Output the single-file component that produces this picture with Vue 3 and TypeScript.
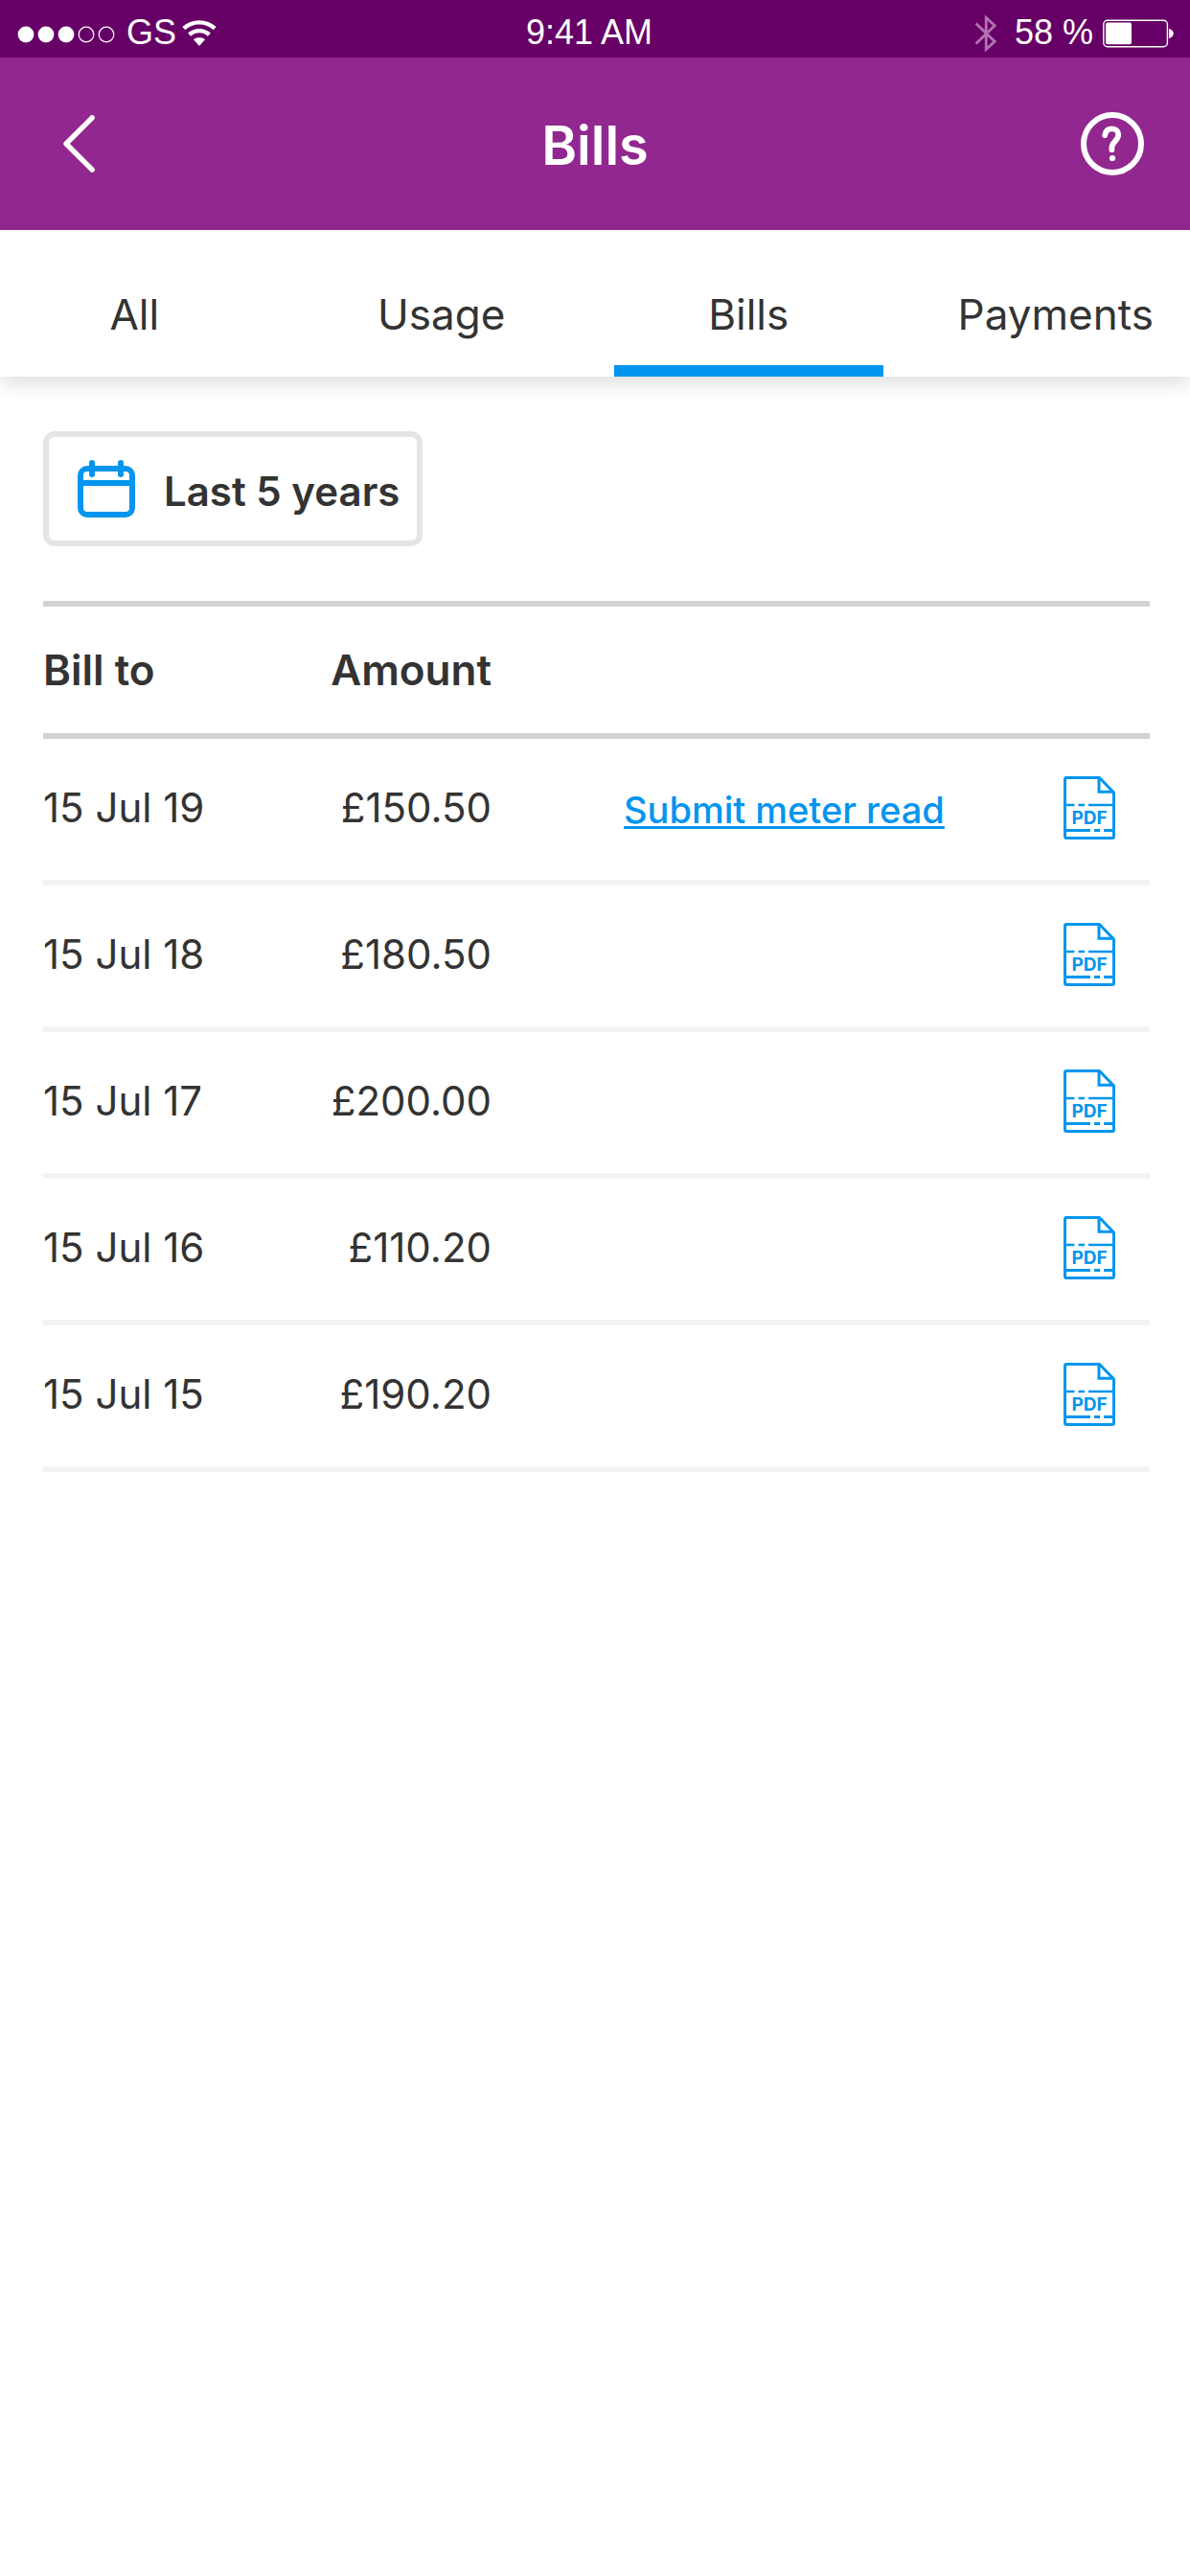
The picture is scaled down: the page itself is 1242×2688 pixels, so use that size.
<script setup lang="ts">
import { ref } from 'vue'

interface Bill {
  date: string
  amount: string
  canSubmitRead?: boolean
}

const tabs: string[] = ['All', 'Usage', 'Bills', 'Payments']
const activeTab = ref<string>('Bills')

const bills: Bill[] = [
  { date: '15 Jul 19', amount: '£150.50', canSubmitRead: true },
  { date: '15 Jul 18', amount: '£180.50' },
  { date: '15 Jul 17', amount: '£200.00' },
  { date: '15 Jul 16', amount: '£110.20' },
  { date: '15 Jul 15', amount: '£190.20' },
]
</script>

<template>
  <div class="screen">
    <div class="status-bar">
      <div class="status-left">
        <svg class="signal" width="102" height="18" viewBox="0 0 102 18" aria-hidden="true">
          <g fill="#fff">
            <circle cx="9" cy="9" r="8.4" />
            <circle cx="30" cy="9" r="8.4" />
            <circle cx="51" cy="9" r="8.4" />
          </g>
          <g fill="none" stroke="#fff" stroke-width="1.2">
            <circle cx="72" cy="9" r="7.8" />
            <circle cx="93" cy="9" r="7.8" />
          </g>
        </svg>
        <span class="carrier">GS</span>
        <svg class="wifi" width="36" height="28" viewBox="0 0 36 28" aria-hidden="true">
          <g fill="none" stroke="#fff" stroke-width="4.4">
            <path d="M1.8 8.6C11 .3 25 .3 34.2 8.6" />
            <path d="M7.6 15.2C13.5 9.8 22.5 9.8 28.4 15.2" />
          </g>
          <path d="M12 20.2C15.3 17.6 20.7 17.6 24 20.2L18 27Z" fill="#fff" />
        </svg>
      </div>
      <span class="time">9:41 AM</span>
      <div class="status-right">
        <svg class="bluetooth" width="24" height="40" viewBox="0 0 24 40" aria-hidden="true">
          <path
            d="M1.6 9.4L21.2 28.2L12.2 36.6V3.4L21.2 11.8L1.6 30.6"
            fill="none"
            stroke="#b273b2"
            stroke-width="2.8"
          />
        </svg>
        <span class="charge">58 %</span>
        <svg class="battery" width="75" height="30" viewBox="0 0 75 30" aria-hidden="true">
          <rect x=".8" y="1.3" width="66.6" height="27.4" rx="4" fill="none" stroke="#fff" stroke-width="1.4" />
          <rect x="3" y="3.6" width="27" height="22.6" rx="2" fill="#fff" />
          <path d="M69 10C75.4 11.6 75.4 18.4 69 20Z" fill="#fff" />
        </svg>
      </div>
    </div>

    <header class="app-header">
      <button class="icon-button" type="button" aria-label="Back">
        <svg width="33" height="60" viewBox="0 0 33 60" aria-hidden="true">
          <path
            d="M30.2 2.8L3 30L30.2 57.2"
            fill="none"
            stroke="#fff"
            stroke-width="5.4"
            stroke-linecap="round"
            stroke-linejoin="round"
          />
        </svg>
      </button>
      <h1 class="title">Bills</h1>
      <button class="icon-button help" type="button" aria-label="Help">
        <svg width="66" height="66" viewBox="0 0 66 66" aria-hidden="true">
          <circle cx="33" cy="33" r="30" fill="none" stroke="#fff" stroke-width="6" />
          <path
            d="M25.2 24.2C25.8 19.8 28.6 17.3 32.6 17.3C36.6 17.3 39.2 19.8 39.2 23.6C39.2 30 32.4 31 32.4 37V39.2"
            fill="none"
            stroke="#fff"
            stroke-width="5.8"
            stroke-linecap="round"
            stroke-linejoin="round"
          />
          <circle cx="33" cy="48" r="3.1" fill="#fff" />
        </svg>
      </button>
    </header>

    <nav class="tabs">
      <button
        v-for="tab in tabs"
        :key="tab"
        type="button"
        class="tab"
        :class="{ active: tab === activeTab }"
        @click="activeTab = tab"
      >
        {{ tab }}
      </button>
    </nav>

    <main class="content">
      <button class="period" type="button">
        <svg width="60" height="60" viewBox="0 0 60 60" aria-hidden="true">
          <g fill="none" stroke="#0495ee" stroke-width="6">
            <rect x="3" y="9" width="54" height="48" rx="7" />
            <path d="M3 24H57" />
            <path d="M15 3V15M45 3V15" stroke-linecap="round" />
          </g>
        </svg>
        <span class="period-label">Last 5 years</span>
      </button>

      <table class="bills">
        <colgroup>
          <col class="col-date" />
          <col class="col-amount" />
          <col />
          <col class="col-file" />
        </colgroup>
        <thead>
          <tr>
            <th scope="col">Bill to</th>
            <th scope="col" class="amount">Amount</th>
            <th></th>
            <th></th>
          </tr>
        </thead>
        <tbody>
          <tr v-for="bill in bills" :key="bill.date">
            <td>{{ bill.date }}</td>
            <td class="amount">{{ bill.amount }}</td>
            <td class="action">
              <a v-if="bill.canSubmitRead" href="#" class="read-link">Submit meter read</a>
            </td>
            <td class="file">
              <a href="#" class="file-link" :aria-label="`Download bill ${bill.date}`">
                <svg width="54" height="66" viewBox="0 0 54 66" aria-hidden="true">
                  <g fill="none" stroke="#0495ee" stroke-width="3" stroke-linejoin="round">
                    <path d="M1.5 3Q1.5 1.5 3 1.5H37.5L52.5 17V63Q52.5 64.5 51 64.5H3Q1.5 64.5 1.5 63Z" />
                    <path d="M37 2V16.2H52" stroke-linejoin="miter" />
                    <path d="M2 30H11.5M15.5 30H22M26 30H52" stroke-width="2.6" />
                    <path d="M2 56.4H28M32 56.4H38M42 56.4H52" />
                  </g>
                  <text x="27" y="49.5" text-anchor="middle" class="file-type">PDF</text>
                </svg>
              </a>
            </td>
          </tr>
        </tbody>
      </table>
    </main>
  </div>
</template>

<style>
body {
  margin: 0;
  background: #fff;
}
</style>

<style scoped>
.screen {
  min-height: 100vh;
  background: #fff;
  color: #333;
  font-family: Inter, 'Open Sans', sans-serif;
  font-size: 42px;
  line-height: 48px;
}

button {
  margin: 0;
  padding: 0;
  border: 0;
  background: none;
  color: inherit;
  font: inherit;
  cursor: pointer;
}

svg {
  display: block;
}

.status-bar {
  display: grid;
  grid-template-columns: 1fr auto 1fr;
  align-items: center;
  height: 60px;
  padding: 0 16px 0 18px;
  background: #606;
  color: #fff;
  font-family: 'Liberation Sans', Arial, sans-serif;
  font-size: 36px;
  line-height: 60px;
}

.status-left,
.status-right {
  display: flex;
  align-items: center;
}

.status-right {
  justify-content: flex-end;
}

.signal {
  margin: 8px 12px 0 0;
}

.carrier {
  padding: 4px 6px 0 0;
}

.wifi,
.bluetooth,
.battery {
  margin-top: 6px;
}

.time {
  padding: 4px 14px 0 0;
}

.charge {
  padding: 4px 10px 0 18px;
}

.app-header {
  display: grid;
  grid-template-columns: 1fr auto 1fr;
  align-items: center;
  height: 180px;
  padding: 0 48px 0 66px;
  background: #91278f;
  color: #fff;
}

.icon-button {
  justify-self: start;
}

.icon-button.help {
  justify-self: end;
}

.title {
  margin: 0;
  padding: 4px 18px 0 0;
  font-size: 56px;
  font-weight: 600;
  line-height: 60px;
}

.tabs {
  display: grid;
  grid-template-columns: repeat(4, 1fr);
  column-gap: 40px;
  height: 153px;
  background: #fff;
  box-shadow: 0 8px 18px rgba(0, 0, 0, 0.12);
}

.tab {
  padding: 34px 0 0;
  border-bottom: 12px solid transparent;
  font-size: 44px;
}

.tab.active {
  border-bottom-color: #0495ee;
}

.content {
  padding: 57px 42px 57px 45px;
}

.period {
  display: flex;
  align-items: center;
  gap: 30px;
  height: 120px;
  box-sizing: border-box;
  padding: 0 18px 0 30px;
  border: 6px solid #e5e5e5;
  border-radius: 12px;
  font-weight: 600;
}

.period-label {
  padding-top: 6px;
}

.bills {
  width: 100%;
  margin-top: 57px;
  border-spacing: 0;
  table-layout: fixed;
}

.col-date {
  width: 240px;
}

.col-amount {
  width: 228px;
}

.col-file {
  width: 126px;
}

th,
td {
  box-sizing: border-box;
  padding: 0;
  text-align: left;
  vertical-align: middle;
}

th {
  height: 144px;
  border-top: 6px solid #d3d3d3;
  border-bottom: 6px solid #d3d3d3;
  font-size: 44px;
  font-weight: 600;
}

td {
  height: 153px;
  padding-bottom: 3px;
  border-bottom: 6px solid #f3f3f3;
}

.amount {
  text-align: right;
}

td.action {
  padding: 0 0 0 138px;
  white-space: nowrap;
}

.read-link {
  color: #0495ee;
  font-size: 38px;
  font-weight: 500;
  text-decoration-thickness: 3px;
  text-underline-offset: 3px;
  text-decoration-skip-ink: none;
}

td.file {
  padding-right: 36px;
}

.file-link {
  display: flex;
  justify-content: flex-end;
}

.file-type {
  fill: #0495ee;
  font-family: Inter, sans-serif;
  font-size: 19px;
  font-weight: 700;
}
</style>
